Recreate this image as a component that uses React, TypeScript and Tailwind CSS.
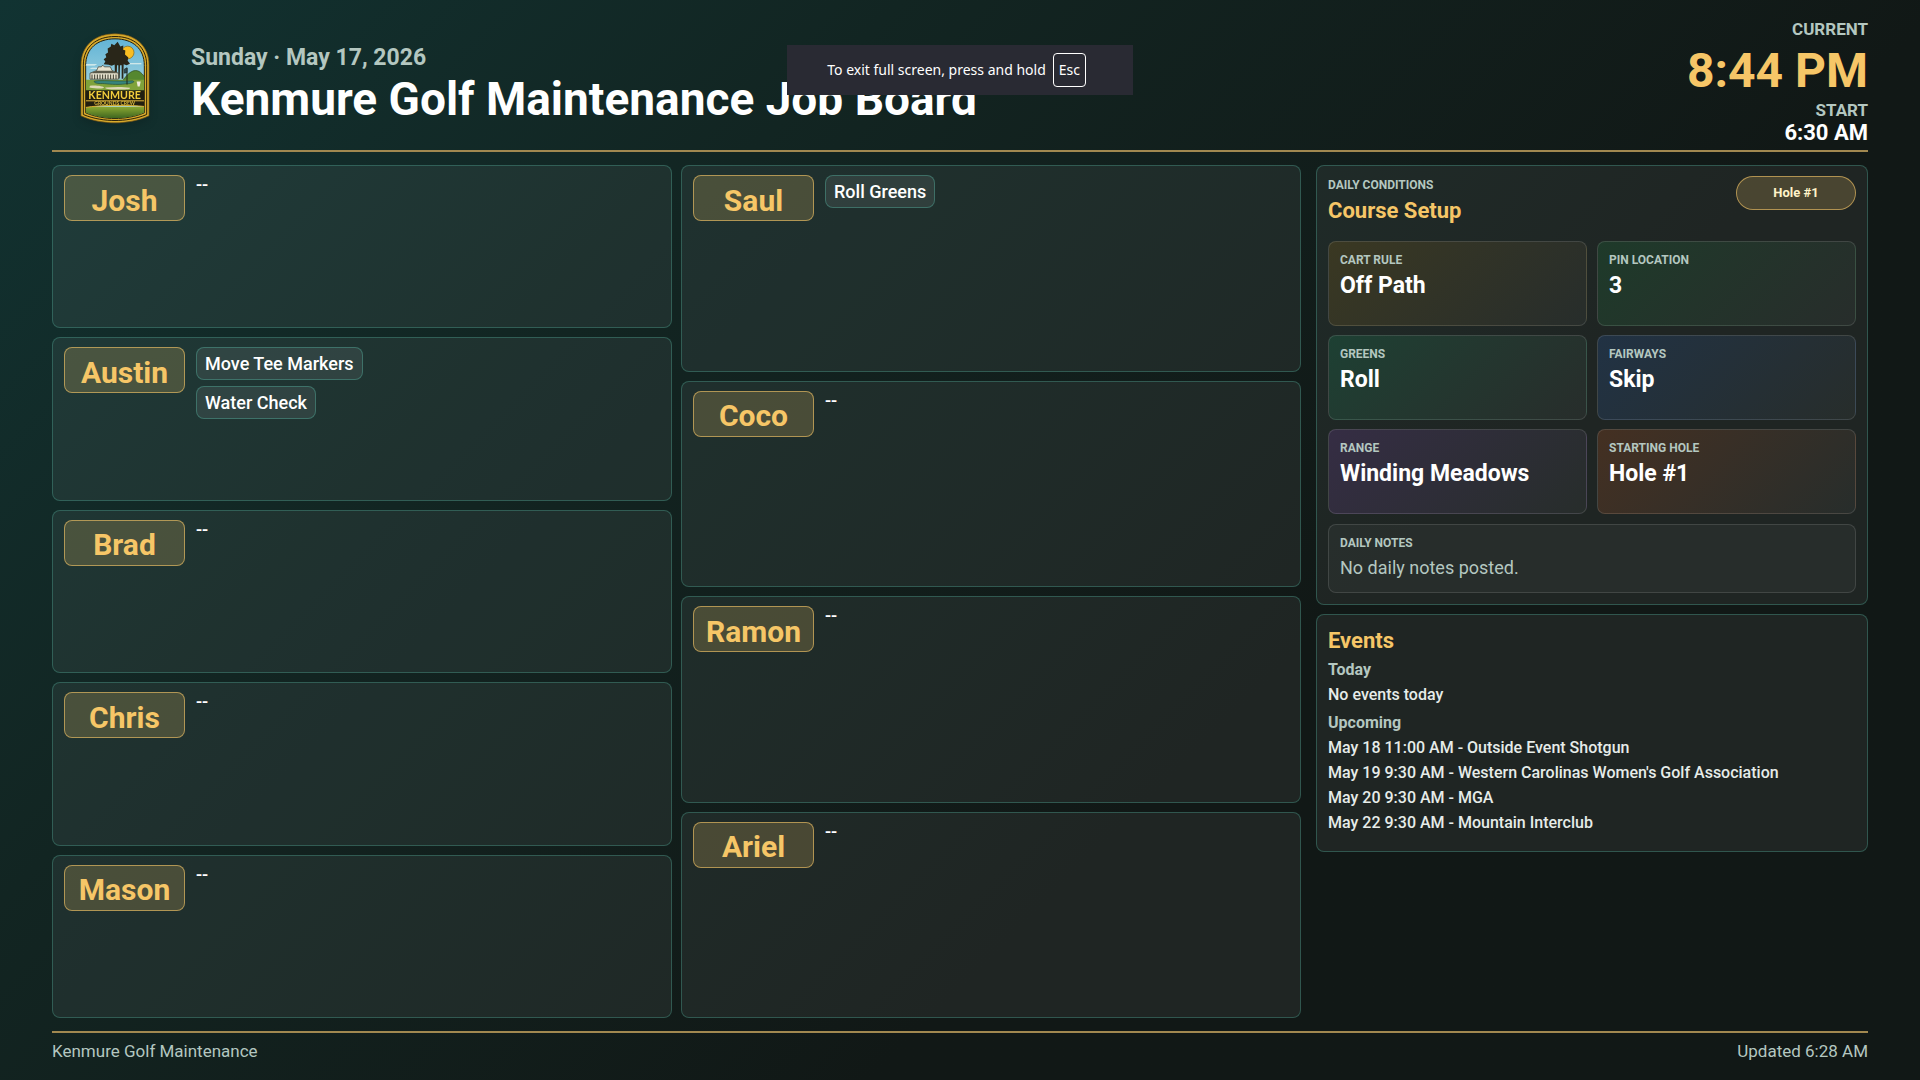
import clsx from "clsx";

interface CrewMember {
    name: string;
    jobs: string[];
}

const crewColumns: CrewMember[][] = [
    [
        { name: "Josh", jobs: [] },
        { name: "Austin", jobs: ["Move Tee Markers", "Water Check"] },
        { name: "Brad", jobs: [] },
        { name: "Chris", jobs: [] },
        { name: "Mason", jobs: [] },
    ],
    [
        { name: "Saul", jobs: ["Roll Greens"] },
        { name: "Coco", jobs: [] },
        { name: "Ramon", jobs: [] },
        { name: "Ariel", jobs: [] },
    ],
];

const conditions = [
    { label: "Cart Rule", value: "Off Path", tint: "from-[#3a3822]" },
    { label: "Pin Location", value: "3", tint: "from-[#1e3a2a]" },
    { label: "Greens", value: "Roll", tint: "from-[#1d4033]" },
    { label: "Fairways", value: "Skip", tint: "from-[#213244]" },
    { label: "Range", value: "Winding Meadows", tint: "from-[#352d44]" },
    { label: "Starting Hole", value: "Hole #1", tint: "from-[#443022]" },
];

const upcoming = [
    "May 18 11:00 AM - Outside Event Shotgun",
    "May 19 9:30 AM - Western Carolinas Women's Golf Association",
    "May 20 9:30 AM - MGA",
    "May 22 9:30 AM - Mountain Interclub",
];

const panel = "rounded-lg border border-[#4ca08f]/40 bg-white/6";

function Logo() {
    return (
        <svg viewBox="60 36 210 272" className="mb-[6px] h-[91px] w-[70px] shrink-0 drop-shadow-lg" role="img" aria-label="Kenmure Grounds Crew">
            <defs>
                <clipPath id="badge">
                    <path d="M77 275V133C77 82 112 53 165 53s88 29 88 80v142c-28 12-60 17-88 17s-60-5-88-17Z" />
                </clipPath>
                <linearGradient id="sky" x1="0" y1="0" x2="0" y2="1">
                    <stop offset="0" stopColor="#62b4d6" />
                    <stop offset="1" stopColor="#c4e4e4" />
                </linearGradient>
                <linearGradient id="turf" x1="0" y1="0" x2="0" y2="1">
                    <stop offset="0" stopColor="#8aa832" />
                    <stop offset="1" stopColor="#31591c" />
                </linearGradient>
            </defs>
            <path d="M63 284V132C63 72 106 38 165 38s102 34 102 94v152c-32 15-70 21-102 21s-70-6-102-21Z" fill="#d9ab2c" stroke="#7a5512" strokeWidth="2" />
            <path d="M70 280V132C70 77 109 46 165 46s95 31 95 86v148c-30 13-65 18-95 18s-65-5-95-18Z" fill="none" stroke="#2a2109" strokeWidth="3" />
            <path d="M77 275V133C77 82 112 53 165 53s88 29 88 80v142c-28 12-60 17-88 17s-60-5-88-17Z" fill="url(#sky)" stroke="#2a2109" strokeWidth="3" />
            <g clipPath="url(#badge)">
                <path d="M78 129h34l-8 4H78zM96 140h28v3H88zM208 126h36v3h-46z" fill="#e8f3ee" />
                <circle cx="203" cy="94" r="19" fill="#f8bd22" stroke="#8a650f" strokeWidth="2" />
                <path d="M173 62l8 14 9-3-1 12 7 3-1 12 10 9-2 10 7 9-10 4-9-3-1 44h-5v-41h-5l-1 40h-4v-40h-4l-1 41h-5l-1-43-9 4-9-3-15-2 5-8-5-7 8-6-3-9 8-5-1-12 9-5 2-9 9 4z" fill="#292619" />
                <path d="M184 185c10-15 25-37 43-37 15 0 24 16 34 29v20h-80z" fill="#55872f" stroke="#2c471b" strokeWidth="2" />
                <path d="M76 176h180v36H76z" fill="#7fa23a" />
                <path d="M90 156l20-8 5-11h9l4-5 5 5h18l5 11 19 8v18H90z" fill="#e7e3cf" stroke="#333126" strokeWidth="2" />
                <path d="M109 149h48l17 7H91z" fill="#59594a" />
                <path d="M96 160v14M104 160v14M112 160v14M120 160v14M128 160v14M136 160v14M144 160v14M152 160v14M160 160v14M168 160v14" stroke="#39392c" strokeWidth="3" />
                <path d="M103 180c24-4 55 1 115-1 10 3-4 9-19 9-30 4-57 0-71-1-18 1-27-3-25-7z" fill="#37857c" stroke="#244f3a" strokeWidth="2" />
                <path d="M90 194c14-3 42 1 42 5s-22 4-44 0zM136 199c24-2 54-3 74 1 4 5-20 6-42 5-20 0-34-1-32-6z" fill="#ddd8b6" />
                <path d="M201 190v-50" stroke="#20251b" strokeWidth="3" />
                <path d="M201 140l-8 4v12l8-2z" fill="#2d4b5a" stroke="#20251b" strokeWidth="2" />
                <path d="M230 181h12l-3 15h-6z" fill="#eee9d8" />
                <path d="M76 207h178v32H76z" fill="#211e10" />
                <path d="M76 257h178v40H76z" fill="url(#turf)" />
                <path d="M76 239h178v17c-45-5-133-5-178 3z" fill="#211e10" stroke="#d9ab2c" strokeWidth="3" />
            </g>
            <text x="164" y="233" textAnchor="middle" fontSize="32" fontWeight="700" fill="#f1cd3c" className="font-['Lato',sans-serif]">KENMURE</text>
            <text x="164" y="253" textAnchor="middle" fontSize="15" fontWeight="700" fill="#d9b83c" className="font-['Lato',sans-serif]">GROUNDS CREW</text>
        </svg>
    );
}

function CrewCard({ name, jobs }: CrewMember) {
    return (
        <article className={clsx(panel, "flex flex-1 items-start gap-[11px] px-[11px] py-[9px]")}>
            <h2 className="flex h-[46px] w-[121px] shrink-0 items-center justify-center rounded-lg border border-[#f6c667]/60 bg-[#f6c667]/20 pt-1 text-[30px] font-bold text-[#f6c667]">
                {name}
            </h2>
            {jobs.length === 0 ? (
                <span className="text-lg leading-5 font-medium">--</span>
            ) : (
                <ul className="flex flex-col items-start gap-[6px]">
                    {jobs.map((job) => (
                        <li key={job} className="rounded-lg border border-[#4ca08f]/50 bg-white/8 px-2 text-lg leading-[31px] font-medium">
                            {job}
                        </li>
                    ))}
                </ul>
            )}
        </article>
    );
}

function CourseSetup() {
    return (
        <section className={clsx(panel, "px-[11px] pt-[10px] pb-[11px]")}>
            <div className="flex h-[65px] items-start justify-between">
                <div className="pt-px">
                    <p className="text-xs leading-4 font-bold text-[#b4c7c0] uppercase">Daily Conditions</p>
                    <h2 className="text-[22px] leading-9 font-bold text-[#f6c667]">Course Setup</h2>
                </div>
                <span className="w-[120px] rounded-full border border-[#f6c667]/60 bg-[#f6c667]/20 text-center text-[13px] leading-8 font-bold text-[#fff3c9]">
                    Hole #1
                </span>
            </div>
            <div className="grid grid-cols-2 gap-x-[10px] gap-y-[9px]">
                {conditions.map(({ label, value, tint }) => (
                    <div key={label} className={clsx("h-[85px] rounded-lg border border-white/12 bg-linear-135 to-[#272d2b] px-[11px] pt-[10px]", tint)}>
                        <p className="text-xs leading-4 font-bold text-[#b4c7c0] uppercase">{label}</p>
                        <p className="text-[23px] leading-9 font-bold">{value}</p>
                    </div>
                ))}
            </div>
            <div className="mt-[10px] rounded-lg border border-white/12 bg-white/4 px-[11px] pt-[10px] pb-[7px]">
                <p className="text-xs leading-4 font-bold text-[#b4c7c0] uppercase">Daily Notes</p>
                <p className="text-lg leading-[34px] text-[#b4c7c0]">No daily notes posted.</p>
            </div>
        </section>
    );
}

function Events() {
    return (
        <section className={clsx(panel, "px-[11px] pt-[9px] pb-4")}>
            <h2 className="text-[22px] leading-[34px] font-bold text-[#f6c667]">Events</h2>
            <h3 className="text-base leading-6 font-bold text-[#b4c7c0]">Today</h3>
            <p className="text-base leading-[25px] font-medium text-[#e6ece9]">No events today</p>
            <h3 className="mt-1 text-base leading-6 font-bold text-[#b4c7c0]">Upcoming</h3>
            <ul>
                {upcoming.map((event) => (
                    <li key={event} className="text-base leading-[25px] font-medium text-[#e6ece9]">{event}</li>
                ))}
            </ul>
        </section>
    );
}

export default function App() {
    return (
        <div className="flex min-h-screen flex-col bg-linear-135 from-[#113332] via-[#122522] via-30% to-[#111816] to-65% px-[52px] font-['Roboto',sans-serif] text-white">
            <header className="flex items-center justify-between border-b-2 border-[#a18850] pt-4 pb-1">
                <div className="flex items-center gap-[41px] pl-7">
                    <Logo />
                    <div className="pt-1">
                        <p className="text-[23px] leading-8 font-bold text-[#b4c7c0]">Sunday · May 17, 2026</p>
                        <h1 className="text-[46px] leading-[50px] font-bold">Kenmure Golf Maintenance Job Board</h1>
                    </div>
                </div>
                <div className="text-right font-bold">
                    <p className="text-[17px] leading-[26px] text-[#b4c7c0] uppercase">Current</p>
                    <p className="text-5xl leading-[58px] text-[#f6c667]">8:44 PM</p>
                    <p className="text-[17px] leading-5 text-[#b4c7c0] uppercase">Start</p>
                    <p className="text-[22px] leading-[26px]">6:30 AM</p>
                </div>
            </header>

            <main className="flex flex-1 gap-[15px] py-[13px]">
                <div className="grid flex-1 grid-cols-2 gap-[9px]">
                    {crewColumns.map((column, i) => (
                        <div key={i} className="flex flex-col gap-[9px]">
                            {column.map((member) => (
                                <CrewCard key={member.name} {...member} />
                            ))}
                        </div>
                    ))}
                </div>
                <aside className="flex w-[552px] flex-col gap-[9px]">
                    <CourseSetup />
                    <Events />
                </aside>
            </main>

            <footer className="flex justify-between border-t-2 border-[#a18850] pt-[3px] pb-[14px] text-[17px] leading-[30px] text-[#b4c7c0]">
                <span>Kenmure Golf Maintenance</span>
                <span>Updated 6:28 AM</span>
            </footer>

            <div className="fixed top-[45px] left-1/2 flex h-[50px] w-[346px] -translate-x-1/2 items-center justify-center gap-[7px] bg-[#292a33] pr-[7px] font-['Noto_Sans',sans-serif] text-sm">
                <span>To exit full screen, press and hold</span>
                <kbd className="flex h-[34px] w-[33px] items-center justify-center rounded-sm border border-white font-['Noto_Sans',sans-serif]">Esc</kbd>
            </div>
        </div>
    );
}
